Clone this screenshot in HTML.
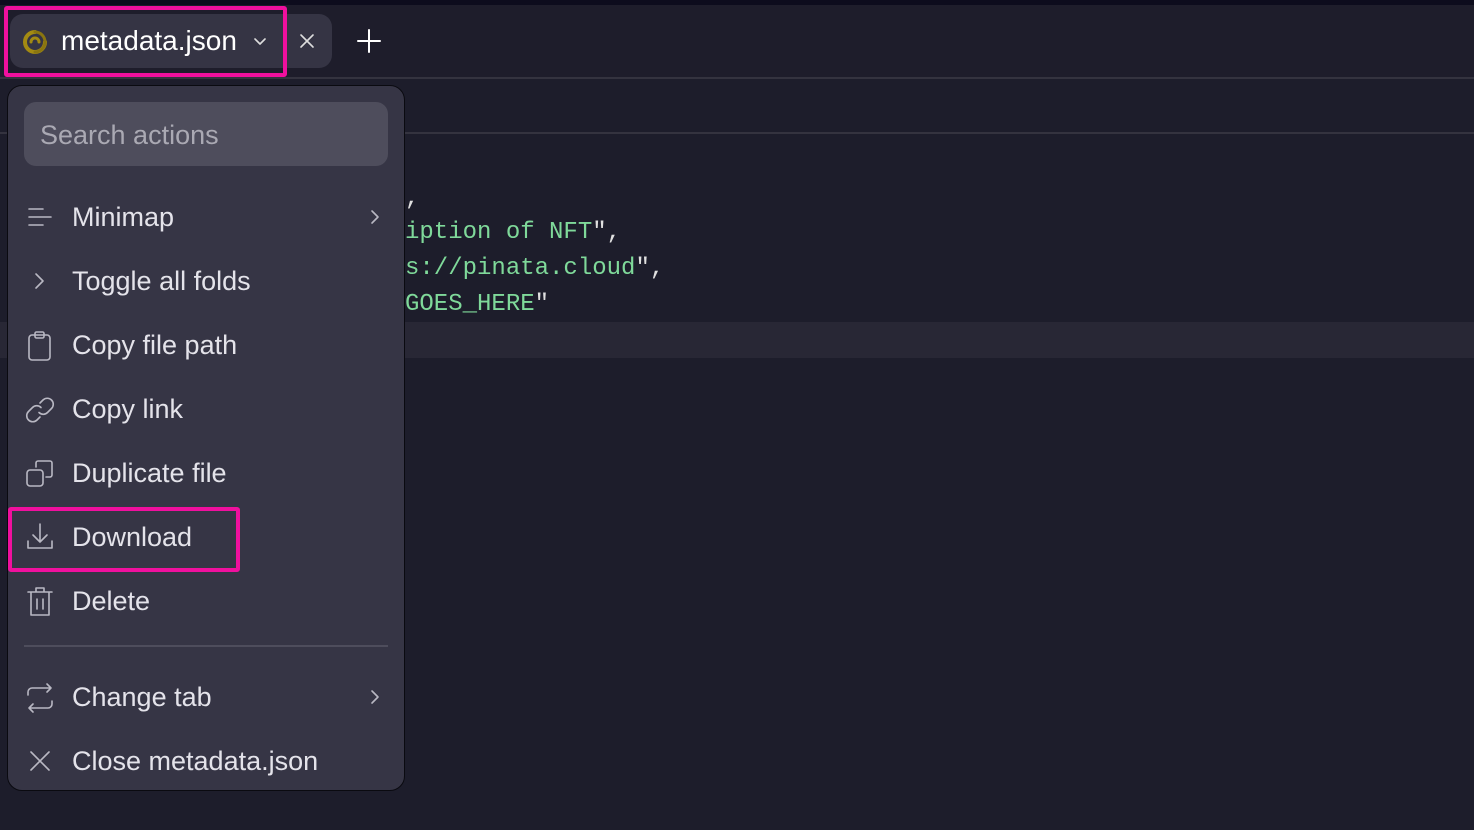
<!DOCTYPE html>
<html><head><style>
body{margin:0;width:1474px;height:830px;background:#1d1d2b;position:relative;overflow:hidden;font-family:"Liberation Sans",sans-serif}
.abs{position:absolute}
.code{font-family:"Liberation Mono",monospace;font-size:24px;color:#7fd99a;white-space:pre;position:absolute;left:405px}
.item{position:absolute;left:72px;font-size:27px;color:#e4e3ea;line-height:30px}
svg{position:absolute;fill:none;stroke:#b9b8c3;stroke-width:1.6;stroke-linecap:round;stroke-linejoin:round}
</style></head><body>
<div class="abs" style="left:0;top:0;width:1474px;height:5px;background:#0d0c1d"></div>
<div class="abs" style="left:0;top:5px;width:1474px;height:72px;background:#1e1d2b"></div>
<div class="abs" style="left:0;top:77px;width:1474px;height:2px;background:#34333f"></div>
<div class="abs" style="left:0;top:132px;width:1474px;height:2px;background:#34333f"></div>
<div class="abs" style="left:0;top:322px;width:1474px;height:36px;background:#282735"></div>
<div class="code" style="top:185px;color:#e0e0e0">,</div>
<div class="code" style="top:219px">iption of NFT<span style="color:#e0e0e0">",</span></div>
<div class="code" style="top:255px">s://pinata.cloud<span style="color:#e0e0e0">",</span></div>
<div class="code" style="top:291px">GOES_HERE<span style="color:#e0e0e0">"</span></div>

<div class="abs" style="left:10px;top:14px;width:322px;height:54px;background:#353444;border-radius:13px"></div>
<div class="abs" style="left:4px;top:6px;width:275px;height:63px;border:4px solid #f0109e;border-radius:3px"></div>
<svg style="left:21px;top:28px" width="28" height="28" viewBox="0 0 28 28"><path d="M14 4a10 10 0 1 0 10 10" stroke="#a38a12" stroke-width="4"/><path d="M14 24A10 10 0 0 0 14 4" stroke="#8a7510" stroke-width="3"/><path d="M10 14a4 4 0 0 1 8 0" stroke="#a38a12" stroke-width="3"/></svg>
<div class="abs" style="left:61px;top:25px;font-size:28px;color:#fff">metadata.json</div>
<svg style="left:252px;top:33px" width="16" height="16" viewBox="0 0 16 16"><path d="M3 6l5 5 5-5" stroke="#ddd"/></svg>
<svg style="left:298px;top:32px" width="18" height="18" viewBox="0 0 18 18"><path d="M3 3l12 12M15 3L3 15" stroke="#ddd"/></svg>
<svg style="left:356px;top:28px" width="26" height="26" viewBox="0 0 26 26"><path d="M13 2v22M2 13h22" stroke="#fff" stroke-width="2"/></svg>

<div class="abs" style="left:7px;top:85px;width:396px;height:704px;background:#363545;border:1.5px solid #0a0a10;border-radius:15px"></div>
<div class="abs" style="left:24px;top:102px;width:364px;height:64px;background:#4e4d5c;border-radius:12px"></div>
<div class="abs" style="left:40px;top:120px;font-size:27px;color:#aaa9b3">Search actions</div>

<svg style="left:26px;top:205px" width="28" height="24" viewBox="0 0 28 24"><path d="M3 4h14M3 12h22M3 20h14"/></svg>
<div class="item" style="top:202px">Minimap</div>
<svg style="left:366px;top:207px" width="18" height="20" viewBox="0 0 18 20"><path d="M6 4l6 6-6 6"/></svg>
<svg style="left:30px;top:271px" width="18" height="20" viewBox="0 0 18 20"><path d="M6 3l7 7-7 7"/></svg>
<div class="item" style="top:266px">Toggle all folds</div>
<svg style="left:26px;top:330px" width="28" height="32" viewBox="0 0 28 32"><rect x="3" y="5" width="21" height="25" rx="3"/><rect x="9" y="2" width="9" height="6" rx="1.5"/></svg>
<div class="item" style="top:330px">Copy file path</div>
<svg style="left:24px;top:394px" width="32" height="32" viewBox="0 0 32 32"><path d="M16 9l3-3a6 6 0 0 1 8.5 8.5l-4 4a6 6 0 0 1-8.5 0M16 23l-3 3a6 6 0 0 1-8.5-8.5l4-4a6 6 0 0 1 8.5 0"/></svg>
<div class="item" style="top:394px">Copy link</div>
<svg style="left:24px;top:458px" width="32" height="32" viewBox="0 0 32 32"><rect x="3" y="12" width="16" height="16" rx="3"/><path d="M12 9V5a2 2 0 0 1 2-2h12a2 2 0 0 1 2 2v12a2 2 0 0 1-2 2h-4"/></svg>
<div class="item" style="top:458px">Duplicate file</div>
<div class="abs" style="left:8px;top:507px;width:224px;height:57px;border:4px solid #f0109e;border-radius:3px"></div>
<svg style="left:24px;top:521px" width="32" height="32" viewBox="0 0 32 32"><path d="M16 3v18M9 14l7 7 7-7M4 20v7h24v-7"/></svg>
<div class="item" style="top:522px">Download</div>
<svg style="left:24px;top:585px" width="32" height="34" viewBox="0 0 32 34"><path d="M4 7h24M12 7V3h8v4M7 7v23h18V7M13 14v10M19 14v10"/></svg>
<div class="item" style="top:586px">Delete</div>
<div class="abs" style="left:24px;top:645px;width:364px;height:2px;background:#4e4d5c"></div>
<svg style="left:24px;top:681px" width="32" height="34" viewBox="0 0 32 34"><path d="M23 3l4 4-4 4M27 7H8a4 4 0 0 0-4 4v3M9 31l-4-4 4-4M5 27h19a4 4 0 0 0 4-4v-3"/></svg>
<div class="item" style="top:682px">Change tab</div>
<svg style="left:366px;top:687px" width="18" height="20" viewBox="0 0 18 20"><path d="M6 4l6 6-6 6"/></svg>
<svg style="left:28px;top:749px" width="24" height="24" viewBox="0 0 24 24"><path d="M3 3l18 18M21 3L3 21"/></svg>
<div class="item" style="top:746px">Close metadata.json</div>
</body></html>
